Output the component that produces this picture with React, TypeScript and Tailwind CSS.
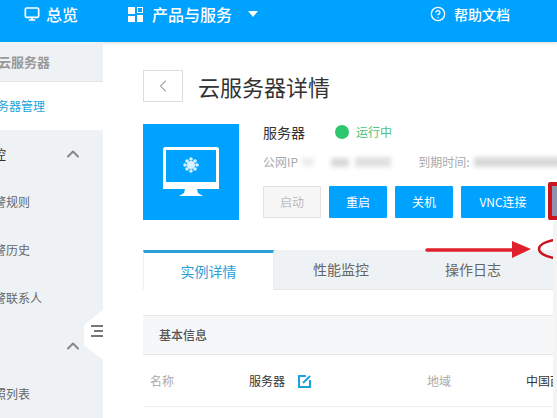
import { ChevronLeft, ChevronUp, CircleHelp, Monitor } from "lucide-react";

const font = { fontFamily: '"Noto Sans CJK SC", "Liberation Sans", sans-serif' };

function Blur({ className }: { className: string }) {
  return <span className={`block shrink-0 bg-[#d9d9d9] blur-[2px] ${className}`} />;
}

function SideItem({ label }: { label: string }) {
  return <div className="flex h-[48px] items-center whitespace-nowrap text-[12px] text-[#666]">{label}</div>;
}

function SideGroup({ label }: { label?: string }) {
  return (
    <div className="flex h-[48px] items-center justify-between pr-[20px] text-[13px] text-[#333]">
      <span className="ml-[-2px]">{label}</span>
      <ChevronUp size={20} className="text-[#888]" strokeWidth={2.5} />
    </div>
  );
}

function ActionButton({ label, width }: { label: string; width: string }) {
  return (
    <button className={`h-[32px] shrink-0 ${width} rounded-[1px] bg-[#00a2ff] text-[12px] text-white`}>{label}</button>
  );
}

export default function App() {
  return (
    <div style={font} className="relative flex h-[418px] w-[557px] flex-col overflow-hidden bg-white">
      <header className="flex h-[42px] shrink-0 items-center whitespace-nowrap bg-[#00a2ff] pb-[14px] text-[16px] font-medium text-white shadow-[0_1px_3px_rgba(0,0,0,0.15)]">
        <div className="flex w-[103px] items-center gap-[6px] pl-[24px]">
          <Monitor size={16} strokeWidth={2.5} />
          <span>总览</span>
        </div>
        <div className="flex items-center pl-[25px]">
          <svg width="15" height="15" viewBox="0 0 15 15" fill="white">
            <rect width="7" height="7" />
            <rect x="9.5" y="0.5" width="5" height="5" fill="none" stroke="white" />
            <rect y="9" width="7" height="6" />
            <rect x="9" y="8" width="6" height="7" />
          </svg>
          <span className="ml-[9px]">产品与服务</span>
          <span className="ml-[16px] h-0 w-0 border-x-[5px] border-t-[6px] border-x-transparent border-t-white" />
        </div>
        <div className="ml-[172px] flex items-center gap-[8px] text-[14px]">
          <CircleHelp size={16} strokeWidth={2} />
          <span>帮助文档</span>
        </div>
      </header>

      <div className="flex min-h-0 flex-1">
        <aside className="w-[103px] shrink-0 overflow-hidden bg-[#eff2f5]">
          <div className="ml-[-2px] flex h-[40px] items-center border-b border-[#e2e4e7] text-[13px] font-bold text-[#999]">
            云服务器
          </div>
          <div className="ml-[-15px] flex h-[48px] items-center bg-white text-[12px] text-[#1ba3dc]">
            服务器管理
          </div>
          <div className="ml-[-18px]">
            <SideGroup label="监控" />
            <SideItem label="报警规则" />
            <SideItem label="报警历史" />
            <SideItem label="报警联系人" />
            <SideGroup />
            <SideItem label="快照列表" />
          </div>
        </aside>

        <main className="min-w-0 flex-1 pl-[40px] pt-[28px]">
          <div className="flex h-[32px] items-center">
            <button className="flex h-[32px] w-[40px] items-center justify-center border border-[#ddd] text-[#888]">
              <ChevronLeft size={20} strokeWidth={1.25} />
            </button>
            <h1 className="ml-[15px] text-[22px] font-normal text-[#333]">云服务器详情</h1>
          </div>

          <div className="mt-[22px] flex">
            <div className="flex h-[96px] w-[96px] shrink-0 items-center justify-center bg-[#00a2ff]">
              <svg width="57" height="50" viewBox="0 0 57 50">
                <rect x="1.5" y="1.5" width="53" height="35" fill="none" stroke="white" strokeWidth="3" rx="1" />
                <rect x="0" y="35" width="56" height="7" fill="white" />
                <path d="M22 42h12l1 4 5 3H16l5-3z" fill="white" />
                <g fill="white" opacity="0.85">
                  <circle cx="28" cy="18" r="4" />
                  <circle cx="28" cy="12" r="1.8" />
                  <circle cx="28" cy="24" r="1.8" />
                  <circle cx="22" cy="18" r="1.8" />
                  <circle cx="34" cy="18" r="1.8" />
                  <circle cx="24" cy="14" r="1.8" />
                  <circle cx="32" cy="14" r="1.8" />
                  <circle cx="24" cy="22" r="1.8" />
                  <circle cx="32" cy="22" r="1.8" />
                </g>
              </svg>
            </div>
            <div className="ml-[24px] min-w-0 flex-1">
              <div className="flex h-[16px] items-center whitespace-nowrap text-[14px] text-[#333]">
                <span>服务器</span>
                <span className="ml-[30px] h-[14px] w-[14px] shrink-0 rounded-full bg-[#2dc76d]" />
                <span className="ml-[7px] text-[12px] text-[#4cc27c]">运行中</span>
              </div>
              <div className="mt-[14px] flex h-[16px] items-center whitespace-nowrap text-[12px] text-[#aaa]">
                <span className="shrink-0">公网IP</span>
                <Blur className="ml-[4px] h-[8px] w-[12px] opacity-50" />
                <Blur className="ml-[17px] h-[9px] w-[18px]" />
                <Blur className="ml-[6px] h-[10px] w-[36px] opacity-80" />
                <span className="ml-[27px] shrink-0">到期时间:</span>
                <Blur className="ml-[5px] h-[10px] w-[90px]" />
              </div>
              <div className="mt-[16px] flex gap-[8px]">
                <button className="h-[32px] w-[58px] shrink-0 border border-[#e3e3e3] bg-[#f7f7f7] text-[12px] text-[#bbb]">启动</button>
                <ActionButton label="重启" width="w-[58px]" />
                <ActionButton label="关机" width="w-[58px]" />
                <ActionButton label="VNC连接" width="w-[84px]" />
                <div className="ml-[-5px] mt-[-4px] h-[38px] w-[40px] shrink-0 rounded-[2px] border-[4px] border-[#c9151e] bg-[#8f93ad]" />
              </div>
            </div>
          </div>

          <div className="mt-[30px] flex h-[40px] w-[500px]">
            <div className="flex w-[131px] items-center justify-center border-x border-t-[3px] border-x-[#eee] border-t-[#2ba0d8] text-[14px] text-[#2ba0d8]">实例详情</div>
            <div className="flex w-[134px] items-center justify-center border-b border-[#e6e8eb] bg-[#eff2f5] text-[14px] text-[#666]">性能监控</div>
            <div className="flex w-[130px] items-center justify-center border-b border-[#e6e8eb] bg-[#eff2f5] text-[14px] text-[#666]">操作日志</div>
            <div className="flex-1 border-b border-[#e6e8eb] bg-[#eff2f5]" />
          </div>

          <div className="mt-[25px] flex h-[40px] items-center border-y border-[#e6e6e6] bg-[#f6f7f9] pl-[16px] text-[12px] font-medium text-[#555]">基本信息</div>
          <div className="flex h-[52px] items-center whitespace-nowrap border-b border-[#eee] text-[12px]">
            <span className="ml-[7px] w-[99px] shrink-0 text-[#aaa]">名称</span>
            <span className="shrink-0 text-[#333]">服务器</span>
            <svg className="ml-[13px] shrink-0" width="14" height="14" viewBox="0 0 14 14" fill="none" stroke="#1ba3dc" strokeWidth="2">
              <path d="M8 2H1v11h11V6" />
              <path d="M5 9l7-7" />
            </svg>
            <span className="ml-[115px] w-[99px] shrink-0 text-[#aaa]">地域</span>
            <span className="shrink-0 text-[#333]">中国西</span>
          </div>
        </main>
      </div>

      {/* 侧栏收起把手 */}
      <div className="absolute left-[84px] top-[310px] flex h-[50px] w-[19px] items-center justify-end bg-white pb-[8px] [clip-path:polygon(100%_0,0_30%,0_70%,100%_100%)]">
        <svg width="12" height="12" viewBox="0 0 12 12" fill="#777">
          <rect y="0" width="12" height="2" />
          <rect x="3" y="5" width="9" height="2" />
          <rect y="10" width="12" height="2" />
        </svg>
      </div>

      {/* 标注：箭头和红圈 */}
      <svg className="absolute left-[420px] top-[230px]" width="137" height="40" viewBox="0 0 137 40" fill="none">
        <path d="M7 20H100" stroke="#e0202a" strokeWidth="3.5" strokeLinecap="round" />
        <path d="M92 11l19 8-19 9z" fill="#e0202a" />
        <ellipse cx="146" cy="19" rx="27" ry="10" stroke="#c9151e" strokeWidth="2.5" />
      </svg>

      {/* 右侧遮挡层 */}
      <div className="absolute bottom-0 right-0 top-[221px] w-[4px] bg-[#f4f4f4]" />
    </div>
  );
}
